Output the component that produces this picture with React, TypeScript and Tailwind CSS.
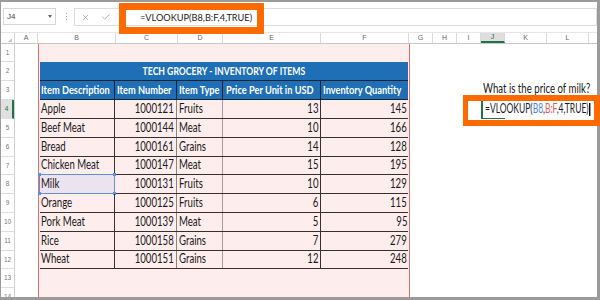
import React from "react";
import { X, Check } from "lucide-react";

const FONT = "font-['Lato','Open_Sans',sans-serif]";

const rows: string[][] = [
  ["Apple", "1000121", "Fruits", "13", "145"],
  ["Beef Meat", "1000144", "Meat", "10", "166"],
  ["Bread", "1000161", "Grains", "14", "128"],
  ["Chicken Meat", "1000147", "Meat", "15", "195"],
  ["Milk", "1000131", "Fruits", "10", "129"],
  ["Orange", "1000125", "Fruits", "6", "115"],
  ["Pork Meat", "1000139", "Meat", "5", "95"],
  ["Rice", "1000158", "Grains", "7", "279"],
  ["Wheat", "1000151", "Grains", "12", "248"],
];
const dataH = ["h-[19px]", "h-[19px]", "h-[19px]", "h-[18px]", "h-[19px]", "h-[19px]", "h-[19px]", "h-[19px]", "h-[18px]"];
const rowHdrH = ["h-[18px]", "h-[19px]", "h-[19px]", ...dataH, "h-[19px]", "h-[19px]"];

const colHeaders: { label: string; w: string; active?: boolean }[] = [
  { label: "A", w: "w-[23px]" },
  { label: "B", w: "w-[78px]" },
  { label: "C", w: "w-[62px]" },
  { label: "D", w: "w-[45px]" },
  { label: "E", w: "w-[98px]" },
  { label: "F", w: "w-[88px]" },
  { label: "G", w: "w-[24px]" },
  { label: "H", w: "w-[24px]" },
  { label: "I", w: "w-[24px]" },
  { label: "J", w: "w-[24px]", active: true },
  { label: "K", w: "w-[42px]" },
  { label: "L", w: "w-[42px]" },
];

function L({ children }: { children: React.ReactNode }) {
  return <span className="inline-block whitespace-nowrap origin-left scale-x-[0.77]">{children}</span>;
}
function R({ children }: { children: React.ReactNode }) {
  return <span className="inline-block whitespace-nowrap origin-right scale-x-[0.77]">{children}</span>;
}

export default function App() {
  return (
    <div className="relative w-[600px] h-[300px] bg-[#9b9b9b] pt-[2px] pl-[1px] pr-[3px] pb-[3px] overflow-hidden">
      <div className="w-full h-full bg-white flex flex-col overflow-hidden">
        {/* Toolbar */}
        <div className="h-[31px] shrink-0 flex items-start pt-[6px] border-b border-[#e6e6e6] font-['Liberation_Sans',sans-serif]">
          <div className="ml-[2px] w-[53px] h-[17px] border border-[#d6d6d6] flex items-center justify-between pl-[3px] pr-[3px]">
            <span className="text-[8px] text-[#444]">J4</span>
            <span className="w-0 h-0 border-l-[2.5px] border-r-[2.5px] border-t-[3px] border-l-transparent border-r-transparent border-t-[#666]" />
          </div>
          <div className="ml-[10px] mt-[5px] flex flex-col gap-[2px]">
            <span className="w-[1px] h-[1px] bg-[#aaa]" />
            <span className="w-[1px] h-[1px] bg-[#aaa]" />
            <span className="w-[1px] h-[1px] bg-[#aaa]" />
          </div>
          <div className="ml-[7px] w-[50px] h-[18px] border-l border-y border-[#dcdcdc] flex items-center pl-[6px] gap-[11px] text-[#777]">
            <X size={9} strokeWidth={1.4} />
            <Check size={10} strokeWidth={1.4} />
          </div>
          <div className="flex-1 h-[18px] border border-[#dcdcdc] flex items-center pl-[15px]">
            <span className={`${FONT} text-[10px] text-[#222] inline-block origin-left scale-x-[0.92]`}>=VLOOKUP(B8,B:F,4,TRUE)</span>
          </div>
        </div>

        {/* Column headers */}
        <div className="h-[11px] shrink-0 flex border-b border-[#c6c6c6] font-['Liberation_Sans',sans-serif]">
          <div className="w-[14px] border-r border-[#d4d4d4] relative">
            <span className="absolute right-[2px] bottom-[1px] w-0 h-0 border-l-[4px] border-t-[4px] border-l-transparent border-t-transparent border-r-0 border-b-[4px] border-b-[#c8c8c8]" />
          </div>
          {colHeaders.map((c) => (
            <div
              key={c.label}
              className={`${c.w} shrink-0 border-r border-[#dadada] flex items-center justify-center text-[7px] ${
                c.active ? "bg-[#dedede] text-[#217346] border-b-2 border-b-[#217346]" : "text-[#666]"
              }`}
            >
              {c.label}
            </div>
          ))}
          <div className="flex-1" />
        </div>

        {/* Body */}
        <div className="flex-1 flex min-h-0">
          {/* Row headers */}
          <div className="w-[14px] shrink-0 flex flex-col border-r border-[#cfcfcf] font-['Liberation_Sans',sans-serif]">
            {rowHdrH.map((h, i) => (
              <div
                key={i}
                className={`${h} shrink-0 border-b border-[#dedede] flex items-center justify-center text-[6.5px] ${
                  i === 3 ? "bg-[#e0e0e0] text-[#217346] border-r-2 border-r-[#217346]" : "text-[#777]"
                }`}
              >
                {i + 1}
              </div>
            ))}
          </div>

          {/* Column A */}
          <div className="w-[23px] shrink-0" />

          {/* Pink panel (B..F) */}
          <div className={`w-[372px] shrink-0 bg-[#fdeded] border-x border-[#e46c6c] pt-[18px] px-[1px] ${FONT}`}>
            <div className="h-[19px] bg-[#1f6fb7] border-b border-[#1b2330] flex items-center justify-center text-white font-bold text-[12px]">
              <span className="inline-block whitespace-nowrap origin-center scale-x-[0.72]">TECH GROCERY - INVENTORY OF ITEMS</span>
            </div>
            <div className="h-[19px] bg-[#1f6fb7] border-b border-[#1b2330] flex text-white font-bold text-[12px]">
              <div className="w-[75px] border-r border-[#1b2330] flex items-center pl-[1px]"><L>Item Description</L></div>
              <div className="w-[62px] border-r border-[#1b2330] flex items-center pl-[2px]"><L>Item Number</L></div>
              <div className="w-[46px] border-r border-[#1b2330] flex items-center pl-[2px]"><L>Item Type</L></div>
              <div className="w-[98px] border-r border-[#1b2330] flex items-center pl-[3px]"><L>Price Per Unit in USD</L></div>
              <div className="w-[87px] flex items-center pl-[2px]"><L>Inventory Quantity</L></div>
            </div>
            {rows.map((r, i) => (
              <div key={r[0]} className={`${dataH[i]} border-b border-[#3a2f2f] flex text-[12.5px] text-[#1a1a1a]`}>
                <div className={`relative w-[75px] border-r border-[#3a2f2f] flex items-center pl-[1px] ${i === 4 ? "bg-[#ebe3ee]" : ""}`}>
                  <L>{r[0]}</L>
                  {i === 4 && (
                    <>
                      <span className="absolute -left-[1px] -top-[1px] -right-[1px] -bottom-[1px] border border-[#5d8fe3]" />
                      <span className="absolute -left-[2px] -top-[2px] w-[3px] h-[3px] bg-[#5d8fe3]" />
                      <span className="absolute -right-[2px] -top-[2px] w-[3px] h-[3px] bg-[#5d8fe3]" />
                      <span className="absolute -left-[2px] -bottom-[2px] w-[3px] h-[3px] bg-[#5d8fe3]" />
                      <span className="absolute -right-[2px] -bottom-[2px] w-[3px] h-[3px] bg-[#5d8fe3]" />
                    </>
                  )}
                </div>
                <div className="w-[62px] border-r border-[#8e8383] flex items-center justify-end pr-[2px]"><R>{r[1]}</R></div>
                <div className="w-[46px] border-r border-[#a89d9d] flex items-center pl-[2px]"><L>{r[2]}</L></div>
                <div className="w-[98px] border-r border-[#3a2f2f] flex items-center justify-end pr-[2px]"><R>{r[3]}</R></div>
                <div className="w-[87px] flex items-center justify-end pr-[1px]"><R>{r[4]}</R></div>
              </div>
            ))}
          </div>

          {/* Right area (G..L) */}
          <div className={`flex-1 min-w-0 flex flex-col ${FONT}`}>
            <div className="h-[18px] shrink-0" />
            <div className="h-[19px] shrink-0" />
            <div className="h-[19px] shrink-0 flex items-end pl-[73px] pb-[1px] text-[12.5px] text-[#1a1a1a]">
              <L>What is the price of milk?</L>
            </div>
            <div className="h-[19px] shrink-0 pl-[71px] flex">
              <div className="relative flex items-center pl-[2px] border-l-2 border-[#217346] text-[12.5px] text-[#1a1a1a]">
                <span className="inline-block whitespace-nowrap origin-left scale-x-[0.68]">
                  =VLOOKUP(<span className="text-[#4a7fe0]">B8</span>,<span className="text-[#e0584f]">B:F</span>,4,TRUE)
                  <span className="inline-block ml-[1px] w-[1.5px] h-[13px] bg-black align-middle" />
                </span>
                <span className="absolute left-0 bottom-0 w-[22px] h-[1px] bg-[#217346]" />
              </div>
            </div>
          </div>
        </div>
      </div>

      {/* Orange annotation boxes */}
      <div className="absolute left-[119px] top-[3px] w-[145px] h-[31px] border-[7px] border-[#ff6a00]" />
      <div className="absolute left-[463px] top-[95px] w-[137px] h-[31px] border-[6px] border-l-[5px] border-[#ff6a00]" />
    </div>
  );
}
